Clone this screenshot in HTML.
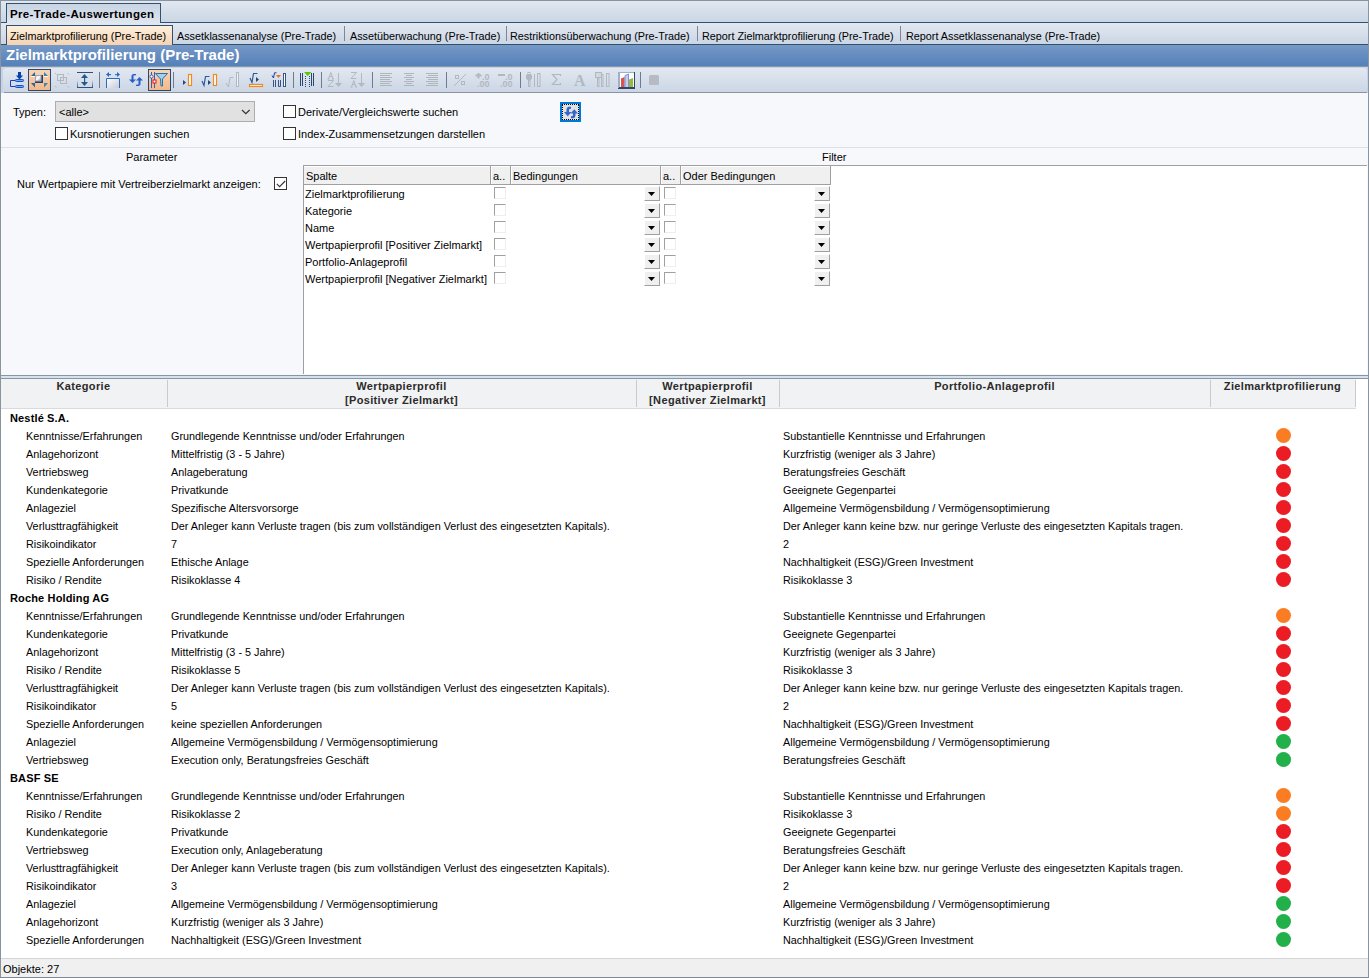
<!DOCTYPE html>
<html><head><meta charset="utf-8">
<style>
*{box-sizing:border-box}
html,body{margin:0;padding:0}
body{width:1369px;height:978px;overflow:hidden;position:relative;background:#f6f8fb;font-family:"Liberation Sans", sans-serif;font-size:11px;color:#000}
.a{position:absolute}
.t{position:absolute;white-space:nowrap;line-height:13px;transform:translateY(1px)}
.gt{position:absolute;left:10px;height:18px;line-height:18px;font-weight:bold;font-size:11px;letter-spacing:0.15px;white-space:nowrap;transform:translateY(1px)}
.rt{position:absolute;height:18px;line-height:18px;font-size:10.83px;white-space:nowrap;transform:translateY(1px)}
.dot{position:absolute;left:1276px;width:15px;height:15px;border-radius:50%}
.ft{position:absolute;height:17px;line-height:17px;white-space:nowrap;font-size:11px;transform:translateY(1px)}
.fcb{position:absolute;width:12px;height:12px;border-top:1px solid #a0a0a0;border-left:1px solid #a0a0a0;border-right:1px solid #eeeeee;border-bottom:1px solid #eeeeee;background:#fff}
.fdd{position:absolute;width:16px;height:15px;background:#f0f0f0;border-top:1px solid #fff;border-left:1px solid #fff;border-right:1px solid #a0a0a0;border-bottom:1px solid #a0a0a0}
.fdd i{position:absolute;left:3px;top:5px;width:7px;height:4px;background:#000;clip-path:polygon(0 0,100% 0,50% 100%)}
.cb{position:absolute;width:13px;height:13px;border:1px solid #333;background:#fff}
.hd{position:absolute;top:379px;font-weight:bold;color:#2b2b2b;text-align:center;line-height:14px;font-size:11px;letter-spacing:0.35px}
.vs{position:absolute;top:380px;width:1px;height:27px;background:#c8cacd}
.fh{position:absolute;top:166px;height:18px;line-height:18px;padding-left:2px;background:#f0f0f0;border-left:1px solid #fff;border-top:1px solid #fff}
.fs{position:absolute;top:166px;width:1px;height:18px;background:#a0a0a0}
.sep{position:absolute;top:73px;width:1px;height:15px;background:#6d7b8c}
</style></head><body>
<!-- tab row 1 -->
<div class="a" style="left:0;top:0;width:1369px;height:23px;background:linear-gradient(#e2e8f1,#c9d5e4)"></div>
<div class="a" style="left:6px;top:3px;width:155px;height:20px;border:1px solid #34506f;border-bottom:none;background:linear-gradient(#c8d4e3,#dfe6ef)"></div>
<div class="a" style="left:10px;top:7px;white-space:nowrap;font-weight:bold;font-size:11.5px;line-height:14px;letter-spacing:0.35px">Pre-Trade-Auswertungen</div>
<div class="a" style="left:0;top:22px;width:6px;height:1px;background:#34506f"></div>
<div class="a" style="left:161px;top:22px;width:1208px;height:1px;background:#34506f"></div>
<!-- tab row 2 -->
<div class="a" style="left:0;top:23px;width:1369px;height:21px;background:linear-gradient(#e2e8f1,#cbd6e4)"></div>
<div class="a" style="left:6px;top:25px;width:167px;height:20px;border:1px solid #34506f;border-bottom:none;background:linear-gradient(#fdf1de,#f5d2b3)"></div>
<div class="t" style="left:10px;top:29px;font-size:10.8px">Zielmarktprofilierung (Pre-Trade)</div>
<div class="t" style="left:177px;top:29px;font-size:10.8px">Assetklassenanalyse (Pre-Trade)</div>
<div class="a" style="left:344px;top:26px;width:1px;height:15px;background:#7b8799"></div>
<div class="t" style="left:350px;top:29px;font-size:10.8px">Assetüberwachung (Pre-Trade)</div>
<div class="a" style="left:506px;top:26px;width:1px;height:15px;background:#7b8799"></div>
<div class="t" style="left:510px;top:29px;font-size:10.8px">Restriktionsüberwachung (Pre-Trade)</div>
<div class="a" style="left:697px;top:26px;width:1px;height:15px;background:#7b8799"></div>
<div class="t" style="left:702px;top:29px;font-size:10.8px">Report Zielmarktprofilierung (Pre-Trade)</div>
<div class="a" style="left:900px;top:26px;width:1px;height:15px;background:#7b8799"></div>
<div class="t" style="left:906px;top:29px;font-size:10.8px">Report Assetklassenanalyse (Pre-Trade)</div>
<div class="a" style="left:0;top:44px;width:6px;height:1px;background:#34506f"></div>
<div class="a" style="left:173px;top:44px;width:1196px;height:1px;background:#34506f"></div>
<!-- title bar -->
<div class="a" style="left:0;top:45px;width:1369px;height:21px;background:linear-gradient(#7699c6,#5480b9)"></div>
<div class="a" style="left:0;top:66px;width:1369px;height:1px;background:#8c98a6"></div>
<div class="a" style="left:6px;top:46px;white-space:nowrap;font-weight:bold;font-size:15px;line-height:18px;color:#fff">Zielmarktprofilierung (Pre-Trade)</div>
<!-- toolbar -->
<div class="a" style="left:0;top:67px;width:1369px;height:26px;background:#c3d3e8"></div>
<div class="a" style="left:3px;top:68px;width:1364px;height:25px;border-radius:3px 3px 0 0;background:linear-gradient(#e2e8f1,#cad5e4)"></div>
<div class="a" style="left:4px;top:92px;width:1363px;height:1px;background:#8d949c"></div>
<svg class="a" style="left:0;top:0" width="680" height="95"><defs>
<linearGradient id="peach" x1="0" y1="0" x2="0" y2="1"><stop offset="0" stop-color="#f9d6b6"/><stop offset="1" stop-color="#f2b789"/></linearGradient>
<linearGradient id="sq" x1="0" y1="0" x2="1" y2="1"><stop offset="0" stop-color="#b9c3d0"/><stop offset="0.5" stop-color="#ffffff"/><stop offset="1" stop-color="#8e9cb0"/></linearGradient>
<linearGradient id="vfade" x1="0" y1="0" x2="0" y2="1"><stop offset="0" stop-color="#cfe0ff"/><stop offset="1" stop-color="#2f4f7a"/></linearGradient>
<linearGradient id="boxg" x1="0" y1="0" x2="1" y2="1"><stop offset="0" stop-color="#ffffff"/><stop offset="1" stop-color="#c5cad6"/></linearGradient>
<filter id="blur"><feGaussianBlur stdDeviation="0.6"/></filter>
</defs><rect x="99" y="72" width="1" height="16" fill="#6d7c8f"/><rect x="173" y="72" width="1" height="16" fill="#6d7c8f"/><rect x="293" y="72" width="1" height="16" fill="#6d7c8f"/><rect x="321" y="72" width="1" height="16" fill="#6d7c8f"/><rect x="372" y="72" width="1" height="16" fill="#6d7c8f"/><rect x="446" y="72" width="1" height="16" fill="#6d7c8f"/><rect x="520" y="72" width="1" height="16" fill="#6d7c8f"/><rect x="640" y="72" width="1" height="16" fill="#6d7c8f"/><rect x="18" y="72" width="3" height="4" fill="#0b3fa8"/><path d="M16 75.5 L23 75.5 L19.5 79.5Z" fill="#0b3fa8"/><rect x="15.5" y="79.5" width="8" height="2" rx="0.8" fill="#6aa8f0" stroke="#1a4fc0" stroke-width="1"/><rect x="15.5" y="85.5" width="8" height="2" rx="0.8" fill="#6aa8f0" stroke="#1a4fc0" stroke-width="1"/><path d="M15 80.5 L10.5 80.5 L10.5 86.5 L15 86.5" fill="none" stroke="#1a3fb8" stroke-width="1"/><rect x="28.5" y="69.5" width="22" height="21" fill="url(#peach)" stroke="#2f476b" stroke-width="1"/><path d="M31 76 L35 72 L35 76Z" fill="#2a6a9a"/><path d="M48 76 L44 72 L44 76Z" fill="#2a8ac0"/><path d="M31 83 L35 87.5 L35 83Z" fill="#2a6a9a"/><path d="M48 83 L44 87.5 L44 83Z" fill="#2a8ac0"/><rect x="31" y="76" width="4" height="1" fill="#fff" opacity="0.8"/><rect x="44" y="76" width="4" height="1" fill="#fff" opacity="0.8"/><rect x="35" y="75" width="8" height="8" fill="#27406a"/><rect x="35" y="75" width="6" height="6" fill="url(#sq)"/><rect x="35.5" y="75.5" width="5.5" height="5.5" fill="none" stroke="#9aa6b8" stroke-width="1"/><rect x="57.5" y="74.5" width="6" height="6" fill="none" stroke="#b3b8bf"/><rect x="60.5" y="77.5" width="6" height="6" fill="none" stroke="#b3b8bf"/><path d="M55 73 l1.5 1.5 M67.5 73 l1.5 1.5 M55 86 l1.5 1.5 M67.5 86 l1.5 1.5" stroke="#b3b8bf" stroke-width="1"/><rect x="77" y="72" width="16" height="1" fill="#2f4f7a"/><rect x="77" y="87" width="16" height="1" fill="#2f4f7a"/><rect x="77" y="80" width="1" height="8" fill="url(#vfade)"/><rect x="92" y="80" width="1" height="8" fill="url(#vfade)"/><path d="M81 78 L84.5 74 L88 78Z M81 82 L84.5 86 L88 82Z" fill="#245a88"/><rect x="84" y="77" width="1.2" height="6" fill="#245a88"/><path d="M106 74.5 L109 72 L109 77Z M120 74.5 L117 72 L117 77Z" fill="#2a6ac0"/><rect x="109" y="74" width="2" height="1.2" fill="#2a6ac0"/><rect x="115" y="74" width="2" height="1.2" fill="#2a8ac8"/><path d="M106.5 88 L106.5 78.5 L119.5 78.5 L119.5 88" fill="url(#boxg)" stroke="#2a6ac0" stroke-width="1"/><path d="M136 74 L133 74 L131.5 75.5 L131.5 79.5 L129 79.5 L132.5 83 L136 79.5 L133.5 79.5 L133.5 75.5 L136 75.3Z" fill="#2a5fc8"/><path d="M136 86 L139 86 L140.5 84.5 L140.5 80.5 L143 80.5 L139.5 77 L136 80.5 L138.5 80.5 L138.5 84.5 L136 84.7Z" fill="#2a5fc8"/><rect x="148.5" y="69.5" width="22" height="21" fill="url(#peach)" stroke="#2f476b" stroke-width="1"/><rect x="151" y="72" width="1" height="16" fill="#2a62c8"/><rect x="154" y="72" width="1" height="16" fill="#2a62c8"/><circle cx="151.5" cy="76.5" r="1.6" fill="#fff" stroke="#2a62c8" stroke-width="1"/><rect x="153" y="80" width="3" height="3" fill="#fff" stroke="#f01010" stroke-width="1"/><path d="M155.5 73.5 L167.5 73.5 L162.5 79 L162.5 86 L161 86 L160.5 79Z" fill="#9ed2f5" stroke="#2e6fa0" stroke-width="1"/><path d="M183 80 L186 82.5 L183 85Z" fill="#2b4570"/><rect x="188.5" y="74.5" width="3" height="11" fill="#fff" stroke="#f08a1e" stroke-width="1.2"/><path d="M202 81 L204 85.5 L205.5 76.5 L209.5 76.5" fill="none" stroke="#2a5aa0" stroke-width="1.2"/><path d="M208 80 L211 82.5 L208 85Z" fill="#2b4570"/><rect x="213.5" y="74.5" width="3" height="11" fill="#fff" stroke="#f08a1e" stroke-width="1.2"/><path d="M226 83 L228.5 87 L230 77.5 L233.5 77.5" fill="none" stroke="#b3b8bf" stroke-width="1"/><rect x="236.5" y="72.5" width="2" height="14" fill="#eef1f5" stroke="#b3b8bf" stroke-width="1"/><path d="M250 78 L252 82.5 L253.5 73.5 L257.5 73.5" fill="none" stroke="#2a5aa0" stroke-width="1.2"/><path d="M256 77 L259 79.5 L256 82Z" fill="#2b4570"/><rect x="249.5" y="84.5" width="13" height="2" fill="#fff" stroke="#f08a1e" stroke-width="1.2"/><path d="M272 75.5 L273.5 78 L274.5 72.8 L276.5 72.8" fill="none" stroke="#1a3fa0" stroke-width="1"/><path d="M276 75 L281 75 L278.5 78Z" fill="#e8761a"/><rect x="273" y="80" width="1" height="7" fill="#3b5582"/><rect x="275" y="80" width="1" height="7" fill="#3b5582"/><path d="M278.5 80 L278.5 86.5 L280.5 86.5 L280.5 80" fill="none" stroke="#3b5582" stroke-width="1"/><rect x="283.5" y="73.5" width="2" height="13" fill="#fff" stroke="#3b5582" stroke-width="1"/><rect x="300" y="73" width="1" height="13" fill="#2d4670"/><rect x="302" y="73" width="1" height="13" fill="#2d4670"/><rect x="311" y="73" width="1" height="13" fill="#2d4670"/><rect x="313" y="73" width="1" height="13" fill="#2d4670"/><rect x="305" y="76" width="1" height="1" fill="#2d4670"/><rect x="305" y="78" width="1" height="1" fill="#2d4670"/><rect x="305" y="80" width="1" height="1" fill="#2d4670"/><rect x="305" y="82" width="1" height="1" fill="#2d4670"/><rect x="305" y="84" width="1" height="1" fill="#2d4670"/><rect x="305" y="86" width="1" height="1" fill="#2d4670"/><rect x="309" y="76" width="1" height="1" fill="#2d4670"/><rect x="309" y="78" width="1" height="1" fill="#2d4670"/><rect x="309" y="80" width="1" height="1" fill="#2d4670"/><rect x="309" y="82" width="1" height="1" fill="#2d4670"/><rect x="309" y="84" width="1" height="1" fill="#2d4670"/><rect x="309" y="86" width="1" height="1" fill="#2d4670"/><path d="M304 72 L311.5 72 L307.7 76Z" fill="#5cc800"/><path d="M327.5 79 L329.5 79 M332 79 L334 79 M328.5 79 L330.8 72.5 L333 79 M329.5 76.5 L332 76.5" fill="none" stroke="#b3b8bf" stroke-width="1"/><path d="M328 80.5 L333.5 80.5 L328 86.5 L333.5 86.5" fill="none" stroke="#b3b8bf" stroke-width="1"/><rect x="338" y="73" width="1" height="11" fill="#b3b8bf"/><path d="M335 83 L342 83 L338.5 87Z" fill="#b3b8bf"/><path d="M351 72.5 L356.5 72.5 L351 78.5 L356.5 78.5" fill="none" stroke="#b3b8bf" stroke-width="1"/><path d="M350.5 87 L352.5 87 M355 87 L357 87 M351.5 87 L353.8 80.5 L356 87 M352.5 84.5 L355 84.5" fill="none" stroke="#b3b8bf" stroke-width="1"/><rect x="361" y="73" width="1" height="11" fill="#b3b8bf"/><path d="M358 83 L365 83 L361.5 87Z" fill="#b3b8bf"/><rect x="380" y="73" width="12" height="1" fill="#b0b5bc"/><rect x="404" y="73" width="10" height="1" fill="#b0b5bc"/><rect x="426" y="73" width="12" height="1" fill="#b0b5bc"/><rect x="380" y="75" width="10" height="1" fill="#b0b5bc"/><rect x="406" y="75" width="6" height="1" fill="#b0b5bc"/><rect x="428" y="75" width="10" height="1" fill="#b0b5bc"/><rect x="380" y="77" width="12" height="1" fill="#b0b5bc"/><rect x="404" y="77" width="10" height="1" fill="#b0b5bc"/><rect x="426" y="77" width="12" height="1" fill="#b0b5bc"/><rect x="380" y="79" width="10" height="1" fill="#b0b5bc"/><rect x="406" y="79" width="6" height="1" fill="#b0b5bc"/><rect x="428" y="79" width="10" height="1" fill="#b0b5bc"/><rect x="380" y="81" width="12" height="1" fill="#b0b5bc"/><rect x="404" y="81" width="10" height="1" fill="#b0b5bc"/><rect x="426" y="81" width="12" height="1" fill="#b0b5bc"/><rect x="380" y="83" width="10" height="1" fill="#b0b5bc"/><rect x="406" y="83" width="6" height="1" fill="#b0b5bc"/><rect x="428" y="83" width="10" height="1" fill="#b0b5bc"/><rect x="380" y="85" width="12" height="1" fill="#b0b5bc"/><rect x="404" y="85" width="10" height="1" fill="#b0b5bc"/><rect x="426" y="85" width="12" height="1" fill="#b0b5bc"/><rect x="455.5" y="75.5" width="3" height="3" fill="none" stroke="#b3b8bf"/><rect x="461.5" y="81.5" width="3" height="3" fill="none" stroke="#b3b8bf"/><path d="M454 86 L466 74" stroke="#b3b8bf" stroke-width="1"/><path d="M475.5 75.5 L481.5 75.5 M478.5 73 L478.5 78.5" stroke="#b3b8bf" stroke-width="2"/><text x="482" y="80" font-size="9" font-weight="bold" fill="#b3b8bf" font-family="Liberation Sans">.0</text><text x="477" y="87" font-size="9" font-weight="bold" fill="#b3b8bf" font-family="Liberation Sans">.00</text><rect x="498" y="74" width="7" height="2" fill="#b3b8bf"/><text x="505" y="80" font-size="9" font-weight="bold" fill="#b3b8bf" font-family="Liberation Sans">.0</text><text x="500" y="87" font-size="9" font-weight="bold" fill="#b3b8bf" font-family="Liberation Sans">.00</text><rect x="526.5" y="74.5" width="5" height="5" rx="1.5" fill="#b3b8bf" stroke="#b3b8bf"/><rect x="528" y="72.5" width="2" height="2" fill="none" stroke="#b3b8bf"/><rect x="528.5" y="80.5" width="1.5" height="6" fill="none" stroke="#b3b8bf"/><rect x="534" y="74" width="1" height="13" fill="#b3b8bf"/><rect x="537.5" y="73.5" width="2.5" height="13" fill="none" stroke="#b3b8bf"/><path d="M560.5 76 L560.5 74.5 L552.5 74.5 L557 79.5 L552.5 84.5 L560.5 84.5 L560.5 83" fill="none" stroke="#b3b8bf" stroke-width="1.2"/><text x="574" y="86" font-size="16" font-weight="bold" fill="#b3b8bf" font-family="Liberation Serif">A</text><rect x="595" y="72" width="6" height="5" fill="#d3d8df"/><rect x="595.5" y="72.5" width="6" height="5" fill="none" stroke="#b3b8bf"/><rect x="597.5" y="78.5" width="1.5" height="8" fill="none" stroke="#b3b8bf"/><rect x="601.5" y="74.5" width="1.5" height="12" fill="none" stroke="#b3b8bf"/><rect x="606.5" y="73.5" width="2.5" height="13" fill="none" stroke="#b3b8bf"/><rect x="618" y="72" width="17" height="17" fill="#2f476b"/><rect x="618" y="72" width="16" height="16" fill="#9fb0c8"/><rect x="620" y="73" width="14" height="14" fill="#fff"/><path d="M621 88 L621 78.5 L624.5 77 L624.5 88Z" fill="#d9534f"/><path d="M625 88 L625 75.5 L628.5 74 L628.5 88Z" fill="#c5d0ea" stroke="#3a5ad0" stroke-width="0.6"/><path d="M629 88 L629 79.5 L633 78 L633 88Z" fill="#9ab83c"/><rect x="619" y="87" width="16" height="1.5" fill="#2f476b"/><rect x="649" y="75" width="10" height="10" rx="1.5" fill="#b6bac1" filter="url(#blur)"/></svg>
<!-- options -->
<div class="t" style="left:13px;top:105px">Typen:</div>
<div class="a" style="left:55px;top:101px;width:200px;height:21px;background:#e1e1e1;border:1px solid #adadad"></div>
<div class="t" style="left:59px;top:105px">&lt;alle&gt;</div>
<svg class="a" style="left:241px;top:109px" width="11" height="7"><path d="M1 1 L4.8 4.6 L8.6 1" fill="none" stroke="#333" stroke-width="1.2"/></svg>
<div class="cb" style="left:55px;top:127px"></div>
<div class="t" style="left:70px;top:127px">Kursnotierungen suchen</div>
<div class="cb" style="left:283px;top:105px"></div>
<div class="t" style="left:298px;top:105px">Derivate/Vergleichswerte suchen</div>
<div class="cb" style="left:283px;top:127px"></div>
<div class="t" style="left:298px;top:127px">Index-Zusammensetzungen darstellen</div>
<div class="a" style="left:560px;top:102px;width:21px;height:20px;border:2px solid #0078d7;background:#e1e1e1"></div>
<div class="a" style="left:562px;top:104px;width:17px;height:16px;border:1px dotted #000"></div>
<svg class="a" style="left:564px;top:106px" width="15" height="14" viewBox="0 0 15 14"><path d="M7 0.8 L4.5 0.8 Q2.5 1.5 2.5 3.5 L2.5 6 L0 6 L3.75 10.2 L7.5 6 L5 6 L5 3.5 Q5 2.8 7 2.8 Z" fill="#3366cc"/><path d="M7 12.2 L9.5 12.2 Q11.5 11.5 11.5 9.5 L11.5 7.5 L14 7.5 L10.25 3.3 L6.5 7.5 L9 7.5 L9 9.5 Q9 10.2 7 10.2 Z" fill="#3366cc"/></svg>
<div class="a" style="left:1px;top:147px;width:1367px;height:1px;background:#dde1e7"></div>
<!-- parameter/filter -->
<div class="t" style="left:126px;top:150px">Parameter</div>
<div class="t" style="left:822px;top:150px">Filter</div>
<div class="t" style="left:17px;top:177px">Nur Wertpapiere mit Vertreiberzielmarkt anzeigen:</div>
<div class="cb" style="left:274px;top:177px"></div>
<svg class="a" style="left:276px;top:180px" width="10" height="8"><path d="M0.8 3.8 L3.6 6.6 L9.2 1" fill="none" stroke="#333" stroke-width="1.1"/></svg>
<div class="a" style="left:303px;top:165px;width:1064px;height:209px;background:#fff;border-top:1px solid #a0a0a0;border-left:1px solid #a0a0a0"></div>
<div class="a" style="left:304px;top:166px;width:527px;height:19px;background:#f0f0f0;border-bottom:1px solid #a0a0a0"></div>
<div class="a" style="left:304px;top:166px;width:527px;height:1px;background:#fff"></div>
<div class="fs" style="left:490px"></div><div class="a" style="left:491px;top:166px;width:1px;height:18px;background:#fff"></div>
<div class="fs" style="left:510px"></div><div class="a" style="left:511px;top:166px;width:1px;height:18px;background:#fff"></div>
<div class="fs" style="left:660px"></div><div class="a" style="left:661px;top:166px;width:1px;height:18px;background:#fff"></div>
<div class="fs" style="left:680px"></div><div class="a" style="left:681px;top:166px;width:1px;height:18px;background:#fff"></div>
<div class="fs" style="left:830px;height:19px"></div>
<div class="ft" style="top:167px;left:306px">Spalte</div>
<div class="ft" style="top:167px;left:493px">a..</div>
<div class="ft" style="top:167px;left:513px">Bedingungen</div>
<div class="ft" style="top:167px;left:663px">a..</div>
<div class="ft" style="top:167px;left:683px">Oder Bedingungen</div>
<div class="ft" style="top:185px;left:305px">Zielmarktprofilierung</div>
<div class="fcb" style="top:187px;left:494px"></div>
<div class="fdd" style="top:186px;left:644px"><i></i></div>
<div class="fcb" style="top:187px;left:664px"></div>
<div class="fdd" style="top:186px;left:814px"><i></i></div>
<div class="ft" style="top:202px;left:305px">Kategorie</div>
<div class="fcb" style="top:204px;left:494px"></div>
<div class="fdd" style="top:203px;left:644px"><i></i></div>
<div class="fcb" style="top:204px;left:664px"></div>
<div class="fdd" style="top:203px;left:814px"><i></i></div>
<div class="ft" style="top:219px;left:305px">Name</div>
<div class="fcb" style="top:221px;left:494px"></div>
<div class="fdd" style="top:220px;left:644px"><i></i></div>
<div class="fcb" style="top:221px;left:664px"></div>
<div class="fdd" style="top:220px;left:814px"><i></i></div>
<div class="ft" style="top:236px;left:305px">Wertpapierprofil [Positiver Zielmarkt]</div>
<div class="fcb" style="top:238px;left:494px"></div>
<div class="fdd" style="top:237px;left:644px"><i></i></div>
<div class="fcb" style="top:238px;left:664px"></div>
<div class="fdd" style="top:237px;left:814px"><i></i></div>
<div class="ft" style="top:253px;left:305px">Portfolio-Anlageprofil</div>
<div class="fcb" style="top:255px;left:494px"></div>
<div class="fdd" style="top:254px;left:644px"><i></i></div>
<div class="fcb" style="top:255px;left:664px"></div>
<div class="fdd" style="top:254px;left:814px"><i></i></div>
<div class="ft" style="top:270px;left:305px">Wertpapierprofil [Negativer Zielmarkt]</div>
<div class="fcb" style="top:272px;left:494px"></div>
<div class="fdd" style="top:271px;left:644px"><i></i></div>
<div class="fcb" style="top:272px;left:664px"></div>
<div class="fdd" style="top:271px;left:814px"><i></i></div>
<!-- splitter -->
<div class="a" style="left:1px;top:375px;width:1367px;height:1px;background:#8794a2"></div>
<div class="a" style="left:1px;top:376px;width:1367px;height:2px;background:#d6e1ef"></div>
<div class="a" style="left:1px;top:378px;width:1367px;height:1px;background:#8794a2"></div>
<!-- grid -->
<div class="a" style="left:1px;top:379px;width:1367px;height:579px;background:#fff"></div>
<div class="a" style="left:1px;top:379px;width:1355px;height:29px;background:#f1f2f4"></div>
<div class="a" style="left:1px;top:408px;width:1355px;height:1px;background:#d8dadd"></div>
<div class="vs" style="left:167px"></div>
<div class="vs" style="left:636px"></div>
<div class="vs" style="left:779px"></div>
<div class="vs" style="left:1210px"></div>
<div class="vs" style="left:1355px"></div>
<div class="hd" style="left:0;width:167px;top:379px">Kategorie</div>
<div class="hd" style="left:167px;width:469px;top:379px">Wertpapierprofil<br>[Positiver Zielmarkt]</div>
<div class="hd" style="left:636px;width:143px;top:379px">Wertpapierprofil<br>[Negativer Zielmarkt]</div>
<div class="hd" style="left:779px;width:431px;top:379px">Portfolio-Anlageprofil</div>
<div class="hd" style="left:1210px;width:145px;top:379px">Zielmarktprofilierung</div>
<div class="gt" style="top:408px">Nestlé S.A.</div>
<div class="rt" style="top:426px;left:26px">Kenntnisse/Erfahrungen</div>
<div class="rt" style="top:426px;left:171px">Grundlegende Kenntnisse und/oder Erfahrungen</div>
<div class="rt" style="top:426px;left:783px">Substantielle Kenntnisse und Erfahrungen</div>
<div class="dot" style="top:428px;background:#fb7d23"></div>
<div class="rt" style="top:444px;left:26px">Anlagehorizont</div>
<div class="rt" style="top:444px;left:171px">Mittelfristig (3 - 5 Jahre)</div>
<div class="rt" style="top:444px;left:783px">Kurzfristig (weniger als 3 Jahre)</div>
<div class="dot" style="top:446px;background:#ec1c24"></div>
<div class="rt" style="top:462px;left:26px">Vertriebsweg</div>
<div class="rt" style="top:462px;left:171px">Anlageberatung</div>
<div class="rt" style="top:462px;left:783px">Beratungsfreies Geschäft</div>
<div class="dot" style="top:464px;background:#ec1c24"></div>
<div class="rt" style="top:480px;left:26px">Kundenkategorie</div>
<div class="rt" style="top:480px;left:171px">Privatkunde</div>
<div class="rt" style="top:480px;left:783px">Geeignete Gegenpartei</div>
<div class="dot" style="top:482px;background:#ec1c24"></div>
<div class="rt" style="top:498px;left:26px">Anlageziel</div>
<div class="rt" style="top:498px;left:171px">Spezifische Altersvorsorge</div>
<div class="rt" style="top:498px;left:783px">Allgemeine Vermögensbildung / Vermögensoptimierung</div>
<div class="dot" style="top:500px;background:#ec1c24"></div>
<div class="rt" style="top:516px;left:26px">Verlusttragfähigkeit</div>
<div class="rt" style="top:516px;left:171px">Der Anleger kann Verluste tragen (bis zum vollständigen Verlust des eingesetzten Kapitals).</div>
<div class="rt" style="top:516px;left:783px">Der Anleger kann keine bzw. nur geringe Verluste des eingesetzten Kapitals tragen.</div>
<div class="dot" style="top:518px;background:#ec1c24"></div>
<div class="rt" style="top:534px;left:26px">Risikoindikator</div>
<div class="rt" style="top:534px;left:171px">7</div>
<div class="rt" style="top:534px;left:783px">2</div>
<div class="dot" style="top:536px;background:#ec1c24"></div>
<div class="rt" style="top:552px;left:26px">Spezielle Anforderungen</div>
<div class="rt" style="top:552px;left:171px">Ethische Anlage</div>
<div class="rt" style="top:552px;left:783px">Nachhaltigkeit (ESG)/Green Investment</div>
<div class="dot" style="top:554px;background:#ec1c24"></div>
<div class="rt" style="top:570px;left:26px">Risiko / Rendite</div>
<div class="rt" style="top:570px;left:171px">Risikoklasse 4</div>
<div class="rt" style="top:570px;left:783px">Risikoklasse 3</div>
<div class="dot" style="top:572px;background:#ec1c24"></div>
<div class="gt" style="top:588px">Roche Holding AG</div>
<div class="rt" style="top:606px;left:26px">Kenntnisse/Erfahrungen</div>
<div class="rt" style="top:606px;left:171px">Grundlegende Kenntnisse und/oder Erfahrungen</div>
<div class="rt" style="top:606px;left:783px">Substantielle Kenntnisse und Erfahrungen</div>
<div class="dot" style="top:608px;background:#fb7d23"></div>
<div class="rt" style="top:624px;left:26px">Kundenkategorie</div>
<div class="rt" style="top:624px;left:171px">Privatkunde</div>
<div class="rt" style="top:624px;left:783px">Geeignete Gegenpartei</div>
<div class="dot" style="top:626px;background:#ec1c24"></div>
<div class="rt" style="top:642px;left:26px">Anlagehorizont</div>
<div class="rt" style="top:642px;left:171px">Mittelfristig (3 - 5 Jahre)</div>
<div class="rt" style="top:642px;left:783px">Kurzfristig (weniger als 3 Jahre)</div>
<div class="dot" style="top:644px;background:#ec1c24"></div>
<div class="rt" style="top:660px;left:26px">Risiko / Rendite</div>
<div class="rt" style="top:660px;left:171px">Risikoklasse 5</div>
<div class="rt" style="top:660px;left:783px">Risikoklasse 3</div>
<div class="dot" style="top:662px;background:#ec1c24"></div>
<div class="rt" style="top:678px;left:26px">Verlusttragfähigkeit</div>
<div class="rt" style="top:678px;left:171px">Der Anleger kann Verluste tragen (bis zum vollständigen Verlust des eingesetzten Kapitals).</div>
<div class="rt" style="top:678px;left:783px">Der Anleger kann keine bzw. nur geringe Verluste des eingesetzten Kapitals tragen.</div>
<div class="dot" style="top:680px;background:#ec1c24"></div>
<div class="rt" style="top:696px;left:26px">Risikoindikator</div>
<div class="rt" style="top:696px;left:171px">5</div>
<div class="rt" style="top:696px;left:783px">2</div>
<div class="dot" style="top:698px;background:#ec1c24"></div>
<div class="rt" style="top:714px;left:26px">Spezielle Anforderungen</div>
<div class="rt" style="top:714px;left:171px">keine speziellen Anforderungen</div>
<div class="rt" style="top:714px;left:783px">Nachhaltigkeit (ESG)/Green Investment</div>
<div class="dot" style="top:716px;background:#ec1c24"></div>
<div class="rt" style="top:732px;left:26px">Anlageziel</div>
<div class="rt" style="top:732px;left:171px">Allgemeine Vermögensbildung / Vermögensoptimierung</div>
<div class="rt" style="top:732px;left:783px">Allgemeine Vermögensbildung / Vermögensoptimierung</div>
<div class="dot" style="top:734px;background:#22b04b"></div>
<div class="rt" style="top:750px;left:26px">Vertriebsweg</div>
<div class="rt" style="top:750px;left:171px">Execution only, Beratungsfreies Geschäft</div>
<div class="rt" style="top:750px;left:783px">Beratungsfreies Geschäft</div>
<div class="dot" style="top:752px;background:#22b04b"></div>
<div class="gt" style="top:768px">BASF SE</div>
<div class="rt" style="top:786px;left:26px">Kenntnisse/Erfahrungen</div>
<div class="rt" style="top:786px;left:171px">Grundlegende Kenntnisse und/oder Erfahrungen</div>
<div class="rt" style="top:786px;left:783px">Substantielle Kenntnisse und Erfahrungen</div>
<div class="dot" style="top:788px;background:#fb7d23"></div>
<div class="rt" style="top:804px;left:26px">Risiko / Rendite</div>
<div class="rt" style="top:804px;left:171px">Risikoklasse 2</div>
<div class="rt" style="top:804px;left:783px">Risikoklasse 3</div>
<div class="dot" style="top:806px;background:#fb7d23"></div>
<div class="rt" style="top:822px;left:26px">Kundenkategorie</div>
<div class="rt" style="top:822px;left:171px">Privatkunde</div>
<div class="rt" style="top:822px;left:783px">Geeignete Gegenpartei</div>
<div class="dot" style="top:824px;background:#ec1c24"></div>
<div class="rt" style="top:840px;left:26px">Vertriebsweg</div>
<div class="rt" style="top:840px;left:171px">Execution only, Anlageberatung</div>
<div class="rt" style="top:840px;left:783px">Beratungsfreies Geschäft</div>
<div class="dot" style="top:842px;background:#ec1c24"></div>
<div class="rt" style="top:858px;left:26px">Verlusttragfähigkeit</div>
<div class="rt" style="top:858px;left:171px">Der Anleger kann Verluste tragen (bis zum vollständigen Verlust des eingesetzten Kapitals).</div>
<div class="rt" style="top:858px;left:783px">Der Anleger kann keine bzw. nur geringe Verluste des eingesetzten Kapitals tragen.</div>
<div class="dot" style="top:860px;background:#ec1c24"></div>
<div class="rt" style="top:876px;left:26px">Risikoindikator</div>
<div class="rt" style="top:876px;left:171px">3</div>
<div class="rt" style="top:876px;left:783px">2</div>
<div class="dot" style="top:878px;background:#ec1c24"></div>
<div class="rt" style="top:894px;left:26px">Anlageziel</div>
<div class="rt" style="top:894px;left:171px">Allgemeine Vermögensbildung / Vermögensoptimierung</div>
<div class="rt" style="top:894px;left:783px">Allgemeine Vermögensbildung / Vermögensoptimierung</div>
<div class="dot" style="top:896px;background:#22b04b"></div>
<div class="rt" style="top:912px;left:26px">Anlagehorizont</div>
<div class="rt" style="top:912px;left:171px">Kurzfristig (weniger als 3 Jahre)</div>
<div class="rt" style="top:912px;left:783px">Kurzfristig (weniger als 3 Jahre)</div>
<div class="dot" style="top:914px;background:#22b04b"></div>
<div class="rt" style="top:930px;left:26px">Spezielle Anforderungen</div>
<div class="rt" style="top:930px;left:171px">Nachhaltigkeit (ESG)/Green Investment</div>
<div class="rt" style="top:930px;left:783px">Nachhaltigkeit (ESG)/Green Investment</div>
<div class="dot" style="top:932px;background:#22b04b"></div>
<!-- status -->
<div class="a" style="left:1px;top:958px;width:1367px;height:1px;background:#d5d5d5"></div>
<div class="a" style="left:1px;top:959px;width:1367px;height:18px;background:#f0f0f0"></div>
<div class="t" style="left:3px;top:962px">Objekte: 27</div>
<!-- outer border -->
<div class="a" style="left:0;top:0;width:1369px;height:978px;border:1px solid #8a949f;border-bottom-color:#7d8894"></div>
</body></html>
